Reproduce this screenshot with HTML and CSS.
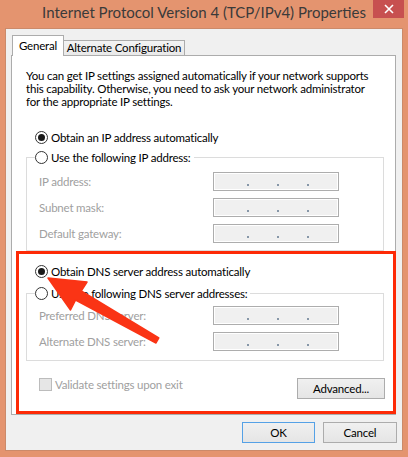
FILE: index.html
```html
<!DOCTYPE html>
<html>
    <head>
        <meta charset="utf-8">
        <link rel="stylesheet" href="styles.css">
    </head>
    <body>
        <div class="window">
            <div class="titlebar">
                <span class="title">Internet Protocol Version 4 (TCP/IPv4) Properties</span>
                <span class="close">
                    <svg width="10" height="10" viewBox="0 0 10 10"><path d="M1 1L9 9M9 1L1 9" stroke="#fff" stroke-width="1.6"/></svg>
                </span>
            </div>

            <div class="dialog">
                <div class="tabs">
                    <div class="tab active">General</div>
                    <div class="tab">Alternate Configuration</div>
                </div>

                <div class="panel">
                    <p class="intro">You can get IP settings assigned automatically if your network supports<br>this capability. Otherwise, you need to ask your network administrator<br>for the appropriate IP settings.</p>

                    <div class="option ip-auto"><span class="radio on"></span>Obtain an IP address automatically</div>

                    <div class="group ip-group">
                        <div class="legend"><span class="radio"></span>Use the following IP address:</div>
                        <div class="field"><span>IP address:</span><span class="ipbox"><i></i><i></i><i></i></span></div>
                        <div class="field"><span>Subnet mask:</span><span class="ipbox"><i></i><i></i><i></i></span></div>
                        <div class="field"><span>Default gateway:</span><span class="ipbox"><i></i><i></i><i></i></span></div>
                    </div>

                    <div class="option dns-auto"><span class="radio on"></span>Obtain DNS server address automatically</div>

                    <div class="group dns-group">
                        <div class="legend"><span class="radio"></span>Use the following DNS server addresses:</div>
                        <div class="field"><span>Preferred DNS server:</span><span class="ipbox"><i></i><i></i><i></i></span></div>
                        <div class="field"><span>Alternate DNS server:</span><span class="ipbox"><i></i><i></i><i></i></span></div>
                    </div>

                    <div class="panel-foot">
                        <div class="check"><span class="checkbox"></span>Validate settings upon exit</div>
                        <span class="btn">Advanced...</span>
                    </div>
                </div>

                <div class="buttons">
                    <span class="btn default">OK</span>
                    <span class="btn">Cancel</span>
                </div>
            </div>

            <!-- red callout over the DNS section -->
            <div class="callout"></div>
            <svg class="arrow" width="408" height="457" viewBox="0 0 408 457">
                <polygon points="48,278 87,282 81.2,291 158.8,338 156,343 75.6,300 70.5,310" fill="#fa3415" stroke="#fa3415" stroke-width="1.5" stroke-linejoin="round"/>
            </svg>
        </div>
    </body>
</html>
```

FILE: styles.css
```css
body {
    margin: 0;
    background: #e4946f;
    font-family: Lato, "Noto Sans", sans-serif;
    font-size: 11.5px;
    letter-spacing: -0.2px;
    color: #000;
    white-space: nowrap;
    overflow: hidden;
}
.window {
    position: relative;
    width: 408px;
    height: 457px;
}
.titlebar {
    display: flex;
    justify-content: center;
    height: 28px;
    line-height: 24px;
}
.title {
    font-size: 15px;
    letter-spacing: 0;
    color: #3a3a3a;
}
.close {
    position: absolute;
    top: 0;
    right: 4px;
    width: 31px;
    height: 18px;
    background: #c75050;
    display: flex;
        align-items: center;
        justify-content: center;
}
.close svg {
    display: block;
}
.dialog {
    box-sizing: border-box;
    margin: 0 5px;
    height: 423px;
    padding: 6px 6px 7px 5px;
    background: #f0f0f0;
    border: 1px solid #cb8a6a;
}
.tabs {
    display: flex;
    align-items: flex-end;
    height: 20px;
}
.tab {
    box-sizing: border-box;
    height: 15px;
    width: 122px;
    margin-left: -1px;
    border: 1px solid #acacac;
    border-bottom: none;
    background: linear-gradient(#f3f3f3, #e9e9e9);
    text-align: center;
    line-height: 13px;
}
.tab.active {
    position: relative;
    z-index: 1;
    width: 52px;
    height: 21px;
    margin: 0 0 -1px 1px;
    background: #fff;
    line-height: 19px;
}
.panel {
    box-sizing: border-box;
    height: 360px;
    padding: 0 11px 0 14px;
    background: #fff;
    border: 1px solid #acacac;
}
.intro {
    margin: 13px 0 0;
    line-height: 13px;
}
.option {
    display: flex;
    align-items: center;
    height: 18px;
    padding-left: 9px;
}
.ip-auto {
    margin-top: 20px;
}
.dns-auto {
    margin-top: 11px;
}
.radio {
    box-sizing: border-box;
    width: 13px;
    height: 13px;
    margin-right: 3px;
    border: 1px solid #333;
    border-radius: 50%;
    background: #fff;
    display: flex;
        align-items: center;
        justify-content: center;
}
.radio.on::after {
    content: '';
    width: 7px;
    height: 7px;
    border-radius: 50%;
    background: #1a1a1a;
}
.group {
    border: 1px solid #dcdcdc;
    padding: 0 44px 0 12px;
}
.ip-group {
    margin-top: 11px;
    padding-bottom: 7px;
}
.dns-group {
    margin-top: 13px;
    padding-bottom: 9px;
}
.legend {
    display: flex;
    align-items: center;
    width: fit-content;
    height: 18px;
    margin: -10px 0 0 -4px;
    padding-right: 3px;
    background: #fff;
}
.field {
    display: flex;
    align-items: center;
    justify-content: space-between;
    height: 19px;
    margin-top: 7px;
    color: #a0a0a0;
}
.ip-group .legend + .field {
    margin-top: 6px;
}
.dns-group .legend + .field {
    margin-top: 4px;
}
.ipbox {
    box-sizing: border-box;
    width: 126px;
    height: 19px;
    padding: 0 0 4px 33px;
    border: 1px solid #adadad;
    box-shadow: inset 0 0 0 1px #fff;
    background: #f0f0f0;
    display: flex;
        align-items: flex-end;
        gap: 28px;
}
.ipbox i {
    width: 2px;
    height: 2px;
    background: #8797a8;
}
.panel-foot {
    display: flex;
    justify-content: space-between;
    align-items: flex-start;
    margin: 17px -1px 0 13px;
}
.check {
    display: flex;
    align-items: center;
    height: 14px;
    margin-top: -1px;
    color: #a0a0a0;
}
.checkbox {
    box-sizing: border-box;
    width: 13px;
    height: 13px;
    margin-right: 3px;
    border: 1px solid #bcbcbc;
    background: #e6e6e6;
}
.btn {
    box-sizing: border-box;
    height: 21px;
    width: 88px;
    border: 1px solid #acacac;
    background: linear-gradient(#f0f0f0, #e5e5e5);
    text-align: center;
    line-height: 19px;
}
.buttons {
    display: flex;
    justify-content: flex-end;
    gap: 8px;
    margin: 7px -1px 0 0;
}
.buttons .btn {
    width: 74px;
}
.buttons .btn.default {
    width: 73px;
    border-color: #55a1e6;
}
.callout {
    position: absolute;
    left: 16px;
    top: 251px;
    width: 380px;
    height: 163px;
    box-sizing: border-box;
    border: 3px solid #fd2a06;
}
.arrow {
    position: absolute;
    left: 0;
    top: 0;
    pointer-events: none;
}
```
